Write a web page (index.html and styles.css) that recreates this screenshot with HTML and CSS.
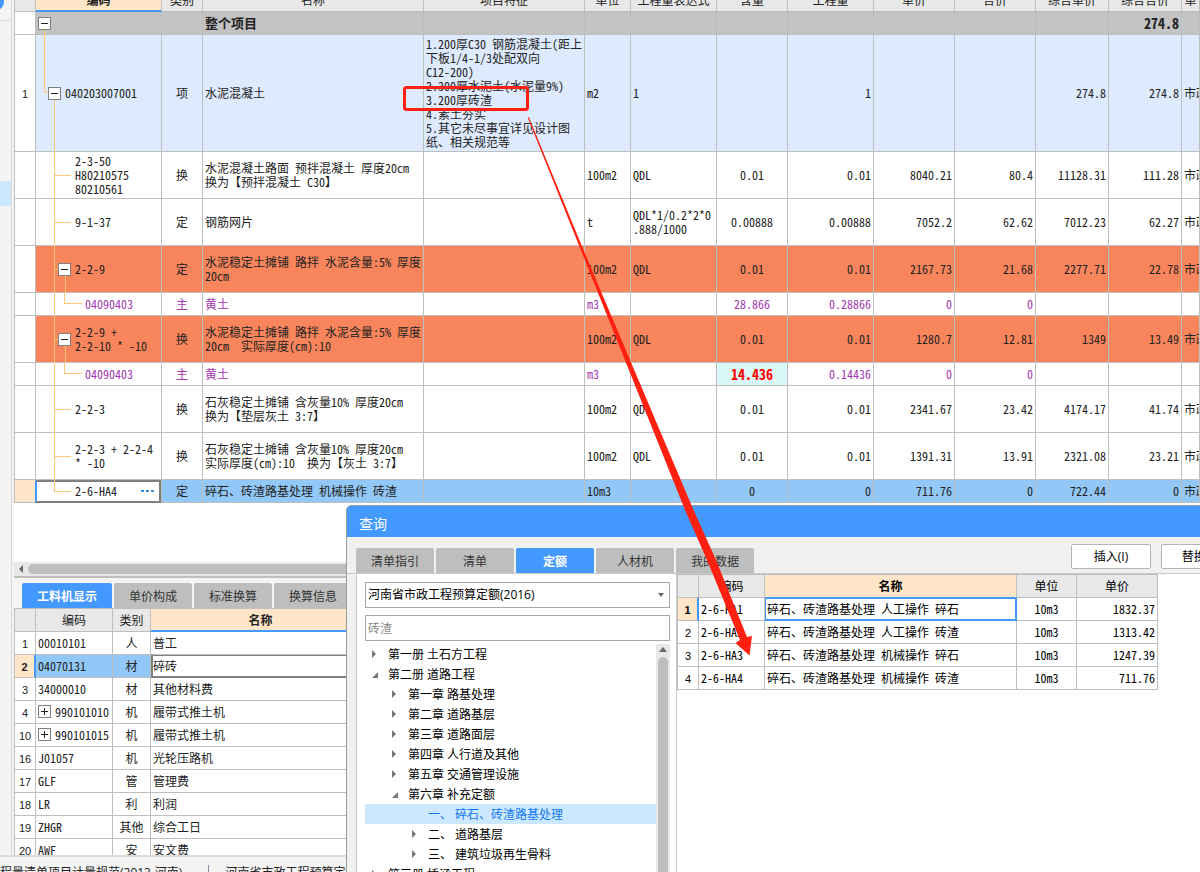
FILE: index.html
```html
<!DOCTYPE html>
<html lang="zh-CN">
<head>
<meta charset="utf-8">
<title>工程计价</title>
<link rel="stylesheet" href="styles.css">
</head>
<body>
<div class="app">
  <div class="workspace">
    <aside class="rail"><span class="rail-dot"></span><div class="rail-head"></div><div class="rail-mark"></div></aside>
    <main class="content">
      <section class="sheet-area">
        <table class="grid sheet">
          <colgroup><col class="w-no"><col class="w-code"><col class="w-kind"><col class="w-name"><col class="w-feat"><col class="w-unit"><col class="w-expr"><col class="w-cont"><col class="w-qty"><col class="w-price"><col class="w-price"><col class="w-total"><col class="w-total"><col></colgroup>
          <thead>
            <tr><th></th><th class="active">编码</th><th>类别</th><th>名称</th><th>项目特征</th><th>单位</th><th>工程量表达式</th><th>含量</th><th>工程量</th><th>单价</th><th>合价</th><th>综合单价</th><th>综合合价</th><th>单</th></tr>
          </thead>
          <tbody>
            <tr class="sum"><td class="no"></td><td class="code root"><button class="tog" aria-label="折叠"></button></td><td></td><td>整个项目</td><td></td><td></td><td></td><td></td><td></td><td></td><td></td><td></td><td class="r figure">274.8</td><td></td></tr>
            <tr class="item"><td class="no">1</td><td class="code l1"><button class="tog" aria-label="折叠"></button>040203007001</td><td class="c">项</td><td>水泥混凝土</td><td>1.200厚C30 钢筋混凝土(距上<br>下板1/4-1/3处配双向<br>C12-200)<br>2.300厚水泥土(水泥量9%)<br>3.200厚砖渣<br>4.素土夯实<br>5.其它未尽事宜详见设计图<br>纸、相关规范等</td><td>m2</td><td>1</td><td></td><td class="r">1</td><td></td><td></td><td class="r">274.8</td><td class="r">274.8</td><td>市政</td></tr>
            <tr class="tall"><td class="no"></td><td class="code l2">2-3-50<br>H80210575<br>80210561</td><td class="c">换</td><td>水泥混凝土路面 预拌混凝土 厚度20cm<br>换为【预拌混凝土 C30】</td><td></td><td>100m2</td><td>QDL</td><td class="c">0.01</td><td class="r">0.01</td><td class="r">8040.21</td><td class="r">80.4</td><td class="r">11128.31</td><td class="r">111.28</td><td>市政</td></tr>
            <tr class="tall"><td class="no"></td><td class="code l2">9-1-37</td><td class="c">定</td><td>钢筋网片</td><td></td><td>t</td><td>QDL*1/0.2*2*0<br>.888/1000</td><td class="c">0.00888</td><td class="r">0.00888</td><td class="r">7052.2</td><td class="r">62.62</td><td class="r">7012.23</td><td class="r">62.27</td><td>市政</td></tr>
            <tr class="tall hot"><td class="no"></td><td class="code l2 open"><button class="tog" aria-label="折叠"></button>2-2-9</td><td class="c">定</td><td>水泥稳定土摊铺 路拌 水泥含量:5% 厚度<br>20cm</td><td></td><td>100m2</td><td>QDL</td><td class="c">0.01</td><td class="r">0.01</td><td class="r">2167.73</td><td class="r">21.68</td><td class="r">2277.71</td><td class="r">22.78</td><td>市政</td></tr>
            <tr class="main-mat"><td class="no"></td><td class="code l3">04090403</td><td class="c">主</td><td>黄土</td><td></td><td>m3</td><td></td><td class="c">28.866</td><td class="r">0.28866</td><td class="r">0</td><td class="r">0</td><td></td><td></td><td></td></tr>
            <tr class="tall hot"><td class="no"></td><td class="code l2 open"><button class="tog" aria-label="折叠"></button>2-2-9 +<br>2-2-10 * -10</td><td class="c">换</td><td>水泥稳定土摊铺 路拌 水泥含量:5% 厚度<br>20cm&nbsp; 实际厚度(cm):10</td><td></td><td>100m2</td><td>QDL</td><td class="c">0.01</td><td class="r">0.01</td><td class="r">1280.7</td><td class="r">12.81</td><td class="r">1349</td><td class="r">13.49</td><td>市政</td></tr>
            <tr class="main-mat"><td class="no"></td><td class="code l3">04090403</td><td class="c">主</td><td>黄土</td><td></td><td>m3</td><td></td><td class="c changed figure">14.436</td><td class="r">0.14436</td><td class="r">0</td><td class="r">0</td><td></td><td></td><td></td></tr>
            <tr class="tall"><td class="no"></td><td class="code l2">2-2-3</td><td class="c">换</td><td>石灰稳定土摊铺 含灰量10% 厚度20cm<br>换为【垫层灰土 3:7】</td><td></td><td>100m2</td><td>QDL</td><td class="c">0.01</td><td class="r">0.01</td><td class="r">2341.67</td><td class="r">23.42</td><td class="r">4174.17</td><td class="r">41.74</td><td>市政</td></tr>
            <tr class="tall"><td class="no"></td><td class="code l2">2-2-3 + 2-2-4<br>* -10</td><td class="c">换</td><td>石灰稳定土摊铺 含灰量10% 厚度20cm<br>实际厚度(cm):10&nbsp; 换为【灰土 3:7】</td><td></td><td>100m2</td><td>QDL</td><td class="c">0.01</td><td class="r">0.01</td><td class="r">1391.31</td><td class="r">13.91</td><td class="r">2321.08</td><td class="r">23.21</td><td>市政</td></tr>
            <tr class="picked"><td class="no"></td><td class="code l2 last editing">2-6-HA4<button class="more" aria-label="更多"><i></i><i></i><i></i></button></td><td class="c">定</td><td>碎石、砖渣路基处理 机械操作 砖渣</td><td></td><td>10m3</td><td></td><td class="c">0</td><td class="r">0</td><td class="r">711.76</td><td class="r">0</td><td class="r">722.44</td><td class="r">0</td><td>市政</td></tr>
          </tbody>
        </table>
      </section>
      <div class="hscroll"><svg width="6" height="10" viewBox="0 0 6 10"><path d="M5 1v8L1 5z" fill="#666"/></svg><div class="hthumb"></div></div>
      <section class="detail">
        <nav class="tabs detail-tabs"><button class="tab on wide">工料机显示</button><button class="tab">单价构成</button><button class="tab">标准换算</button><button class="tab">换算信息</button></nav>
        <div class="detail-list">
          <table class="grid parts">
            <colgroup><col class="w-no"><col class="p-code"><col class="p-kind"><col class="p-name"><col></colgroup>
            <thead><tr><th></th><th>编码</th><th>类别</th><th class="active">名称</th><th></th></tr></thead>
            <tbody>
              <tr><td class="no">1</td><td>00010101</td><td class="c">人</td><td>普工</td><td></td></tr>
              <tr class="cur"><td class="no">2</td><td class="blue">04070131</td><td class="c blue">材</td><td class="focus">碎砖</td><td></td></tr>
              <tr><td class="no">3</td><td>34000010</td><td class="c">材</td><td>其他材料费</td><td></td></tr>
              <tr><td class="no">4</td><td><button class="tog plus" aria-label="展开"></button>990101010</td><td class="c">机</td><td>履带式推土机</td><td></td></tr>
              <tr><td class="no">10</td><td><button class="tog plus" aria-label="展开"></button>990101015</td><td class="c">机</td><td>履带式推土机</td><td></td></tr>
              <tr><td class="no">16</td><td>J01057</td><td class="c">机</td><td>光轮压路机</td><td></td></tr>
              <tr><td class="no">17</td><td>GLF</td><td class="c">管</td><td>管理费</td><td></td></tr>
              <tr><td class="no">18</td><td>LR</td><td class="c">利</td><td>利润</td><td></td></tr>
              <tr><td class="no">19</td><td>ZHGR</td><td class="c">其他</td><td>综合工日</td><td></td></tr>
              <tr><td class="no">20</td><td>AWF</td><td class="c">安</td><td>安文费</td><td></td></tr>
            </tbody>
          </table>
        </div>
      </section>
    </main>
  </div>
  <footer class="status"><span>程量清单项目计量规范(2013-河南)</span><span class="sep"></span><span>河南省市政工程预算定额(2016)</span></footer>
</div>

<section class="dialog" role="dialog" aria-label="查询">
  <header class="dialog-title">查询</header>
  <div class="dialog-bar">
    <nav class="tabs"><button class="tab">清单指引</button><button class="tab">清单</button><button class="tab on">定额</button><button class="tab">人材机</button><button class="tab">我的数据</button></nav>
    <div class="actions"><button class="push">插入(I)</button><button class="push">替换(R)</button></div>
  </div>
  <div class="dialog-body">
    <div class="finder">
      <select class="field" aria-label="定额库"><option>河南省市政工程预算定额(2016)</option></select>
      <input class="field" type="text" placeholder="砖渣" aria-label="搜索">
      <div class="tree-box">
        <ul class="tree">
          <li class="d1 shut">第一册 土石方工程</li>
          <li class="d1 opened">第二册 道路工程</li>
          <li class="d2 shut">第一章 路基处理</li>
          <li class="d2 shut">第二章 道路基层</li>
          <li class="d2 shut">第三章 道路面层</li>
          <li class="d2 shut">第四章 人行道及其他</li>
          <li class="d2 shut">第五章 交通管理设施</li>
          <li class="d2 opened">第六章 补充定额</li>
          <li class="d3 sel">一、 碎石、砖渣路基处理</li>
          <li class="d3 shut">二、 道路基层</li>
          <li class="d3 shut">三、 建筑垃圾再生骨料</li>
          <li class="d1 shut">第三册 桥涵工程</li>
        </ul>
        <div class="vscroll"><svg width="8" height="5" viewBox="0 0 8 5"><path d="M0 5L4 0l4 5z" fill="#666"/></svg><div class="vthumb"></div></div>
      </div>
    </div>
    <div class="results">
      <table class="grid found">
        <colgroup><col class="w-no"><col class="f-code"><col class="f-name"><col class="f-unit"><col class="f-price"></colgroup>
        <thead><tr><th></th><th>编码</th><th class="active">名称</th><th>单位</th><th>单价</th></tr></thead>
        <tbody>
          <tr class="cur"><td class="no">1</td><td>2-6-HA1</td><td class="ring">碎石、砖渣路基处理 人工操作 碎石</td><td class="c">10m3</td><td class="r">1832.37</td></tr>
          <tr><td class="no">2</td><td>2-6-HA2</td><td>碎石、砖渣路基处理 人工操作 砖渣</td><td class="c">10m3</td><td class="r">1313.42</td></tr>
          <tr><td class="no">3</td><td>2-6-HA3</td><td>碎石、砖渣路基处理 机械操作 碎石</td><td class="c">10m3</td><td class="r">1247.39</td></tr>
          <tr><td class="no">4</td><td>2-6-HA4</td><td>碎石、砖渣路基处理 机械操作 砖渣</td><td class="c">10m3</td><td class="r">711.76</td></tr>
        </tbody>
      </table>
    </div>
  </div>
</section>

<svg class="markup" width="360" height="580" viewBox="400 80 360 580" aria-hidden="true">
  <rect x="404.500" y="87.500" width="123" height="22" rx="2" fill="none" stroke="#ff2010" stroke-width="3"/>
  <path d="M527.500 117L529 117.500L583.500 250L693.500 510L716 560L747 637L752 636L749.500 655.500L735.500 643L740 640L707 560L685 510Z" fill="#ff2010"/>
</svg>
</body>
</html>
```
FILE: styles.css
```css
* { box-sizing: border-box; }
body {
  margin: 0;
  height: 100vh;
  overflow: hidden;
  position: relative;
  background: #f4f4f4;
  color: #222;
  font: 12px/14px "Noto Sans Mono CJK SC", "Noto Sans CJK SC", sans-serif;
}
button, input, select { font: inherit; color: inherit; margin: 0; }

.app { display: flex; flex-direction: column; height: calc(100vh + 14px); }
.workspace { flex: 1; min-height: 0; display: flex; border-bottom: 2px solid #dcdcdc; }
.rail { position: relative; flex: none; width: 12px; background: #f4f4f4; border-right: 1px solid #d8d8d8; overflow: hidden; }
.rail-dot { position: absolute; left: -12px; top: -6px; width: 16px; height: 16px; border-radius: 50%; background: #4499ff; }
.rail-head { height: 21px; border-bottom: 1px solid #d8d8d8; }
.rail-mark { height: 25px; margin-top: 160px; background: #cce8ff; }
.content { flex: 1; min-width: 0; display: flex; flex-direction: column; margin-left: 2px; }

/* grids */
.grid { width: 100%; table-layout: fixed; border-collapse: separate; border-spacing: 0; border-left: 1px solid #bebebe; background: #fff; }
.grid th, .grid td { height: 23px; padding: 0 2px; border-right: 1px solid #bebebe; border-bottom: 1px solid #bebebe; text-align: left; vertical-align: middle; white-space: nowrap; overflow: hidden; }
.grid th { background: #e8e8e8; font-weight: 400; text-align: center; padding: 0; }
.grid th.active { background: #ffe6c8; font-weight: 700; border-bottom: 2px solid #4499ff; }
.grid.found th.active { border-bottom: 1px solid #4499ff; }
.grid .c { text-align: center; }
.grid .r { text-align: right; }
.grid td.no { padding: 2px 0 0; text-align: center; font-family: "Liberation Sans", sans-serif; font-size: 11px; }
.w-no { width: 21px; }

.sheet-area { flex: 1; min-height: 0; overflow: hidden; background: #fff; }
.sheet { margin-top: -11px; }
.w-code { width: 126px; }
.w-kind { width: 41px; }
.w-name { width: 221px; }
.w-feat { width: 161px; }
.w-unit { width: 46px; }
.w-expr, .w-qty { width: 86px; }
.w-cont { width: 71px; }
.w-price { width: 81px; }
.w-total { width: 73px; }
.sheet .item td { height: 117px; }
.sheet .tall td { height: 47px; }
.sum td { background: #c3c3c3; font-weight: 700; font-size: 13px; }
.item td { background: #deeafe; }
.hot td { background: #f9855c; }
.main-mat td { color: #a338b0; }
.picked td { background: #92c8f7; }
.sheet td.no { background: #fff; }
.sheet .picked td.no { background: #ffe6c8; }
.main-mat td.changed { background: #dbf8f8; color: #f00; font-weight: 700; }
.grid td.figure { font-size: 14px; }

/* code column outline */
.grid td.code { position: relative; overflow: visible; }
.grid td.l1 { padding-left: 29px; }
.grid td.l2 { padding-left: 39px; }
.grid td.l3 { padding-left: 49px; }
.code::before { content: ""; position: absolute; z-index: 1; left: 18px; top: 0; bottom: -1px; width: 1px; background: #ffc878; }
.code::after { content: ""; position: absolute; z-index: 1; left: 18px; top: 50%; width: 17px; height: 1px; background: #ffc878; }
.root::before { left: 8px; top: 50%; }
.root::after { display: none; }
.l1::before { left: 8px; width: 11px; bottom: 50%; background: none; border-left: 1px solid #ffc878; border-bottom: 1px solid #ffc878; }
.l1::after { width: 1px; height: auto; bottom: -1px; }
.l3::after { left: 28px; top: 0; bottom: 50%; height: auto; background: none; border-left: 1px solid #ffc878; border-bottom: 1px solid #ffc878; }
.open::after { width: 11px; bottom: -1px; height: auto; background: none; border-top: 1px solid #ffc878; border-right: 1px solid #ffc878; }
.last::before { bottom: 50%; }
.grid td.editing { background: #fff; box-shadow: inset 0 2px #808080, inset -2px 0 #808080, inset 0 -1px #808080, inset 1px 0 #4499ff, -1px 0 #4499ff; border-bottom-color: #808080; }
.tog { width: 13px; height: 13px; padding: 0; border: 1px solid #808080; background: #fff; position: relative; vertical-align: top; }
.tog::before { content: ""; position: absolute; left: 2px; top: 5px; width: 7px; height: 1px; background: #222; }
.plus { margin-right: 4px; }
.plus::after { content: ""; position: absolute; left: 5px; top: 2px; width: 1px; height: 7px; background: #222; }
.code .tog { position: absolute; z-index: 2; top: calc(50% - 6px); left: 2px; }
.l1 .tog { left: 12px; }
.l2 .tog { left: 22px; }
.more { position: absolute; right: 7px; top: 5px; display: flex; gap: 2px; padding: 5px 0; border: 0; background: none; }
.more i { width: 3px; height: 2px; background: #3a8ed8; }

.hscroll { flex: none; height: 16px; display: flex; align-items: center; gap: 4px; padding-left: 4px; background: #e8e8e8; border-bottom: 2px solid #bebebe; }
.hthumb { flex: 1; height: 10px; border-radius: 5px 0 0 5px; background: #bebebe; }

/* tabs */
.tabs { display: flex; gap: 2px; font-family: "Noto Sans CJK SC", sans-serif; }
.tab { width: 78px; height: 25px; padding: 0; border: 0; border-radius: 2px 2px 0 0; background: #bebebe; color: #333; }
.tab.wide { width: 90px; }
.tab.on { background: #4499ff; color: #fff; font-weight: 700; }
.detail { flex: none; background: #f4f4f4; }
.detail-tabs { padding: 5px 0 0 8px; }
.detail-list { height: 247px; overflow: hidden; background: #fff; }
.parts { border-top: 1px solid #bebebe; }
.p-code { width: 77px; }
.p-kind { width: 38px; }
.p-name { width: 220px; }
.cur td.blue { background: #92c8f7; }
.grid .cur td.no { background: #ffe6c8; font-weight: 700; border-right: 2px solid #4499ff; }
.cur td.focus { box-shadow: inset 0 1px #808080, inset 2px 0 #808080, inset 0 -1px #808080; border-bottom-color: #808080; }
.cur td.ring { box-shadow: inset 0 0 0 1px #4499ff; border-color: #4499ff; }

.status { flex: none; height: 29px; display: flex; align-items: center; gap: 16px; padding-top: 2px; font-family: "Open Sans", "Noto Sans CJK SC", sans-serif; }
.sep { width: 1px; height: 16px; margin-left: 10px; background: #8a93a3; }

/* query dialog, floating over the sheet */
.dialog { position: absolute; left: 346px; top: 505px; right: -120px; bottom: -120px; display: flex; flex-direction: column; overflow: hidden; background: #f1f1f1; border: 1px solid #9a9a9a; border-radius: 5px 0 0 0; color: #000; }
.dialog-title { flex: none; height: 31px; padding: 10px 12px; background: #4499ff; color: #fff; font: 14px/14px "Noto Sans CJK SC", sans-serif; }
.dialog-bar { flex: none; display: flex; justify-content: space-between; align-items: flex-end; height: 37px; padding: 0 0 0 9px; border-bottom: 1px solid #c8c8c8; }
.actions { display: flex; gap: 10px; padding-bottom: 4px; margin-right: 78px; }
.push { width: 80px; height: 25px; padding: 0; border: 1px solid #b4b4b4; border-radius: 2px; background: #fff; font-family: "Open Sans", "Noto Sans CJK SC", sans-serif; }
.dialog-body { flex: 1; min-height: 0; display: flex; padding-left: 9px; }
.finder { flex: none; width: 321px; display: flex; flex-direction: column; gap: 7px; padding: 8px 6px 0 8px; background: #fff; border-left: 1px solid #c8c8c8; border-right: 1px solid #c8c8c8; font-family: "Open Sans", "Noto Sans CJK SC", sans-serif; }
.field { flex: none; width: 305px; height: 26px; padding: 0 2px; border: 1px solid #a8a8a8; border-radius: 0; background: #fff; }
select.field { appearance: none; background: #fff url("data:image/svg+xml,%3Csvg xmlns='http://www.w3.org/2000/svg' width='6' height='4'%3E%3Cpath d='M0 0h6L3 4z' fill='%23666'/%3E%3C/svg%3E") no-repeat right 5px center; }
.field::placeholder { color: #888; opacity: 1; }
.tree-box { flex: 1; min-height: 0; display: flex; width: 305px; overflow: hidden; margin-top: -4px; }
.tree { flex: 1; margin: 0; padding: 0; list-style: none; }
.tree li { position: relative; height: 20px; line-height: 22px; white-space: pre; }
.tree .d1 { padding-left: 23px; }
.tree .d2 { padding-left: 43px; }
.tree .d3 { padding-left: 63px; }
.tree li::before { position: absolute; top: 6px; margin-left: -16px; }
.tree .shut::before { content: ""; border: 4px solid transparent; border-left-color: #777; border-right: 0; }
.tree .opened::before { content: ""; border: 3px solid #777; border-top-color: transparent; border-left-color: transparent; top: 8px; }
.tree .sel { background: #cce8ff; color: #1177ee; }
.vscroll { width: 14px; display: flex; flex-direction: column; align-items: center; gap: 5px; padding-top: 3px; background: #e8e8e8; }
.vthumb { flex: 1; width: 10px; border-radius: 5px; background: #bebebe; }
.results { flex: 1; background: #fff; }
.grid.found { width: 481px; border-top: 1px solid #bebebe; }
.f-code { width: 66px; }
.f-name { width: 252px; }
.f-unit { width: 60px; }
.f-price { width: 81px; }

.markup { position: absolute; left: 400px; top: 80px; }
```
